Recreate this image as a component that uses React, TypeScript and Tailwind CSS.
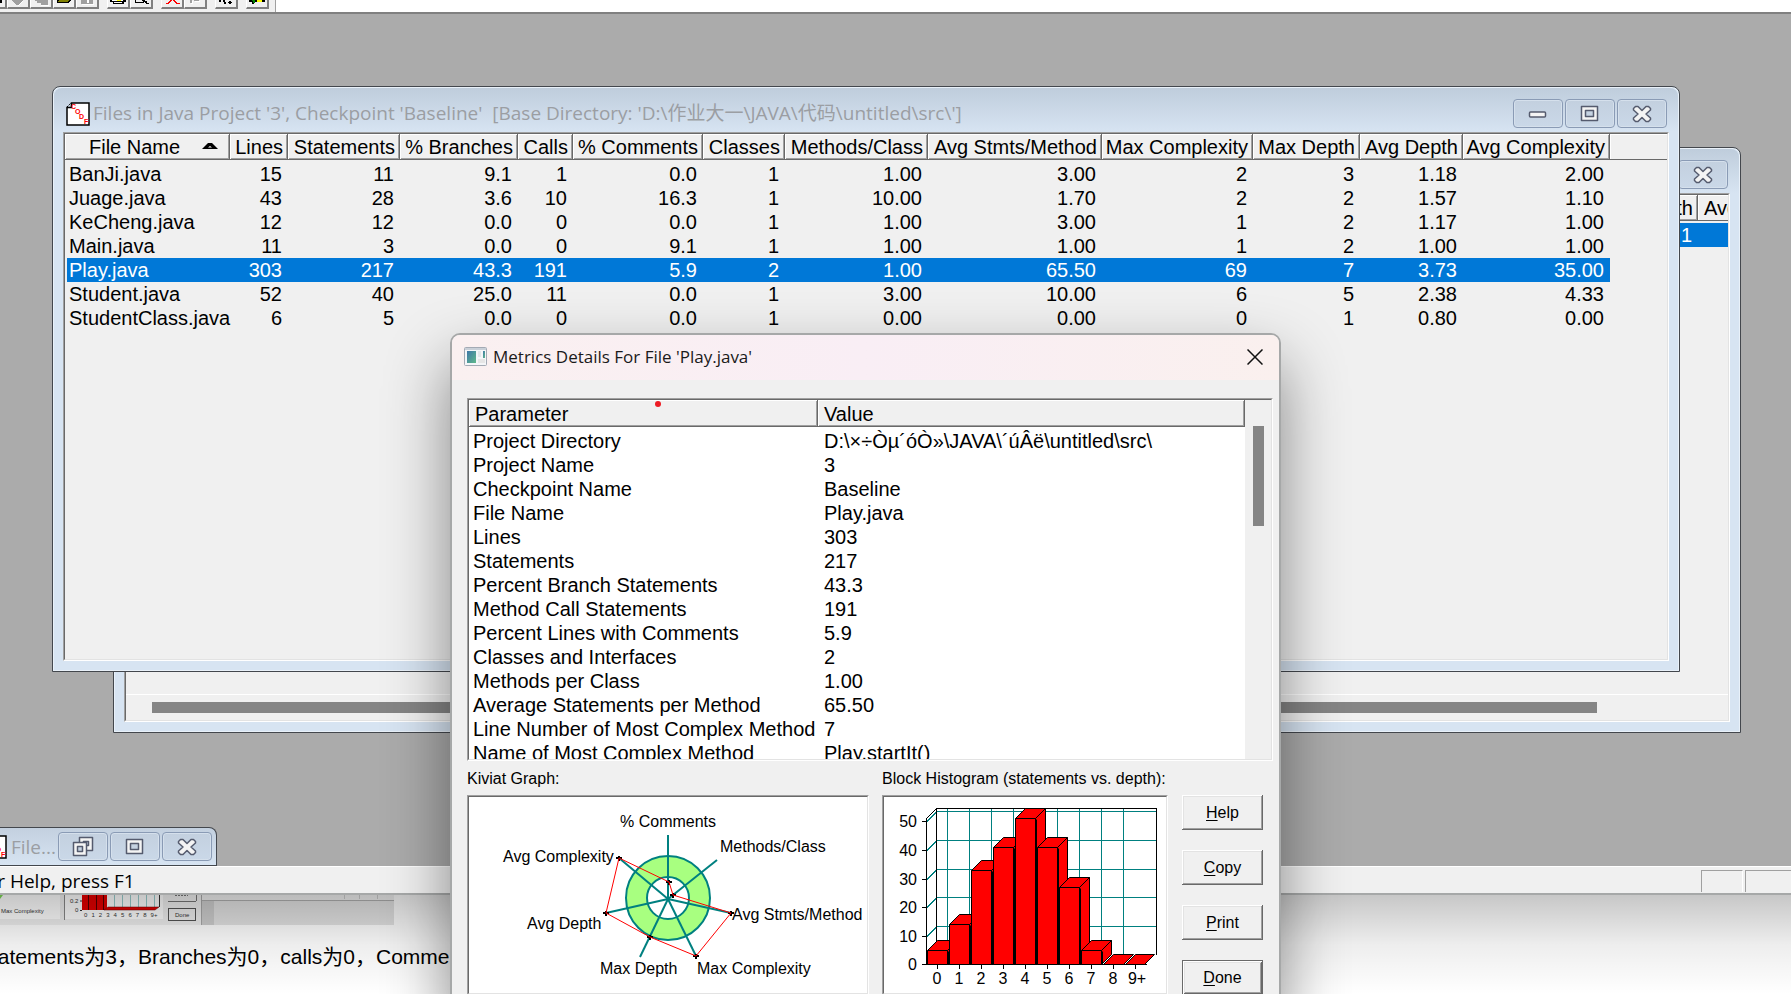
import type { ReactNode } from "react";

type Column = { label: string; width: string };

const columns: Column[] = [
  { label: "File Name", width: "w-[165px]" },
  { label: "Lines", width: "w-[58px]" },
  { label: "Statements", width: "w-[112px]" },
  { label: "% Branches", width: "w-[118px]" },
  { label: "Calls", width: "w-[55px]" },
  { label: "% Comments", width: "w-[130px]" },
  { label: "Classes", width: "w-[82px]" },
  { label: "Methods/Class", width: "w-[143px]" },
  { label: "Avg Stmts/Method", width: "w-[174px]" },
  { label: "Max Complexity", width: "w-[151px]" },
  { label: "Max Depth", width: "w-[107px]" },
  { label: "Avg Depth", width: "w-[103px]" },
  { label: "Avg Complexity", width: "w-[147px]" },
];

const files = [
  ["BanJi.java", "15", "11", "9.1", "1", "0.0", "1", "1.00", "3.00", "2", "3", "1.18", "2.00"],
  ["Juage.java", "43", "28", "3.6", "10", "16.3", "1", "10.00", "1.70", "2", "2", "1.57", "1.10"],
  ["KeCheng.java", "12", "12", "0.0", "0", "0.0", "1", "1.00", "3.00", "1", "2", "1.17", "1.00"],
  ["Main.java", "11", "3", "0.0", "0", "9.1", "1", "1.00", "1.00", "1", "2", "1.00", "1.00"],
  ["Play.java", "303", "217", "43.3", "191", "5.9", "2", "1.00", "65.50", "69", "7", "3.73", "35.00"],
  ["Student.java", "52", "40", "25.0", "11", "0.0", "1", "3.00", "10.00", "6", "5", "2.38", "4.33"],
  ["StudentClass.java", "6", "5", "0.0", "0", "0.0", "1", "0.00", "0.00", "0", "1", "0.80", "0.00"],
];

const details = [
  ["Project Directory", "D:\\×÷Òµ´óÒ»\\JAVA\\´úÂë\\untitled\\src\\"],
  ["Project Name", "3"],
  ["Checkpoint Name", "Baseline"],
  ["File Name", "Play.java"],
  ["Lines", "303"],
  ["Statements", "217"],
  ["Percent Branch Statements", "43.3"],
  ["Method Call Statements", "191"],
  ["Percent Lines with Comments", "5.9"],
  ["Classes and Interfaces", "2"],
  ["Methods per Class", "1.00"],
  ["Average Statements per Method", "65.50"],
  ["Line Number of Most Complex Method", "7"],
  ["Name of Most Complex Method", "Play.startIt()"],
];

const headCell =
  "flex items-center overflow-hidden border-r border-b border-[#696969] bg-[#f0f0f0] font-normal whitespace-nowrap shadow-[inset_1px_1px_0_#fff,inset_-1px_-1px_0_#a0a0a0]";

const sunken =
  "border border-t-[#a0a0a0] border-l-[#a0a0a0] border-r-white border-b-white";
const sunkenInner =
  "border border-t-[#696969] border-l-[#696969] border-r-[#e3e3e3] border-b-[#e3e3e3]";

/* Page with the red CODE letters running down it */
const CodeIcon = () => (
  <svg width="24" height="24" viewBox="0 0 24 24" className="shrink-0" aria-hidden="true">
    <path d="M5.500 1H23V23H1V5.500H5.500Z" fill="#fff" stroke="#000" strokeWidth="1.500" />
    <path d="M1 5 5 1" fill="none" stroke="#000" strokeDasharray="2 1" />
    <g fill="#f00" fontSize="7" fontWeight="bold" fontFamily="Liberation Sans, sans-serif">
      <text x="5" y="7">C</text>
      <text x="9" y="12">O</text>
      <text x="13" y="17">D</text>
      <text x="18" y="22">F</text>
    </g>
  </svg>
);

type Kind = "Minimize" | "Maximize" | "Restore" | "Close";

const glyphs: Record<Kind, ReactNode> = {
  Minimize: <rect x="3.500" y="10" width="16" height="5" rx="1" />,
  Maximize: (
    <>
      <path d="M3.500 4.500H19.500V18.500H3.500Z" />
      <path d="M7.500 8.500H15.500V14.500H7.500Z" fill="#c6d3e2" />
    </>
  ),
  Restore: (
    <>
      <path d="M8.500 2.500H21.500V15.500H8.500Z" />
      <path d="M12.500 6.500H17.500V10.500H12.500Z" fill="#c6d3e2" />
      <path d="M2.500 7.500H15.500V20.500H2.500Z" />
      <path d="M6.500 11.500H11.500V16.500H6.500Z" fill="#c6d3e2" />
    </>
  ),
  Close: (
    <path d="M3.500 6.500 5.500 4.500H8L12 8.500 16 4.500H18.500L20.500 6.500V8L16 12 20.500 16V17.500L18.500 19.500H16L12 15.500 8 19.500H5.500L3.500 17.500V16L8 12 3.500 8Z" />
  ),
};

const WindowButton = ({ kind }: { kind: Kind }) => (
  <button
    type="button"
    aria-label={kind}
    className="flex h-[29px] w-[50px] items-center justify-center rounded-sm border border-[#8a9bb5] bg-linear-to-b from-[#c3d0df] to-[#cad8e8] shadow-[inset_0_0_0_1px_#d5e0ec]"
  >
    <svg width="24" height="24" viewBox="0 0 24 24" fill="#f4f4f4" stroke="#555b6e" strokeWidth="1.500" strokeLinejoin="round">
      {glyphs[kind]}
    </svg>
  </button>
);

type WindowProps = {
  title: string;
  className: string;
  children: ReactNode;
};

const MdiWindow = ({ title, className, children }: WindowProps) => (
  <section
    className={`absolute flex h-[586px] flex-col rounded-t-lg border border-[#43474d] bg-[#d7e4f2] px-[10px] pb-[10px] shadow-[inset_0_0_0_1px_#e9f1f9] ${className}`}
  >
    <header className="-mx-[9px] mt-px flex h-[44px] shrink-0 items-start rounded-t-lg bg-linear-to-b from-[#bfcddc] to-[#d7e4f2] px-[11px] pt-[11px]">
      <div className="flex h-[29px] min-w-0 flex-1 items-center gap-[3px] pl-px">
        <CodeIcon />
        <h2 className="truncate font-['Open_Sans','Noto_Sans_CJK_SC',sans-serif] text-[19px] whitespace-pre text-[#9b9ea3]">
          {title}
        </h2>
      </div>
      <div className="flex gap-0.5">
        <WindowButton kind="Minimize" />
        <WindowButton kind="Maximize" />
        <WindowButton kind="Close" />
      </div>
    </header>
    <div className={`flex min-h-0 flex-1 ${sunken}`}>
      <div className={`flex min-w-0 flex-1 flex-col overflow-hidden bg-[#f0f0f0] ${sunkenInner}`}>
        {children}
      </div>
    </div>
  </section>
);

const FileTable = () => (
  <table className="w-full table-fixed border-separate border-spacing-0 text-[20px] leading-6">
    <thead>
      <tr>
        {columns.map((col, i) => (
          <th key={col.label} scope="col" className={`p-0 pb-0.5 ${col.width}`}>
            <div className={`h-[26px] ${headCell} ${i === 0 ? "justify-start pl-6" : "justify-end pr-1"}`}>
              {col.label}
              {i === 0 && (
                <svg width="16" height="7" viewBox="0 0 16 7" className="ml-[22px]" aria-hidden="true">
                  <path d="M0 6 6 0H10L16 6Z" fill="#000" />
                  <path d="M6 4.500 8 3 10 4.500Z" fill="#fff" />
                </svg>
              )}
            </div>
          </th>
        ))}
        <td className="p-0 pb-0.5">
          <div className="h-[26px] border-b border-[#696969] shadow-[inset_1px_1px_0_#fff]" />
        </td>
      </tr>
    </thead>
    <tbody>
      {files.map((row) => {
        const selected = row[0] === "Play.java";
        return (
          <tr key={row[0]}>
            {row.map((cell, i) => (
              <td
                key={columns[i].label}
                className={`h-6 p-0 whitespace-nowrap ${selected ? "bg-[#0078d7] text-white" : ""} ${
                  i === 0 ? "border-l-2 border-[#f0f0f0] pl-0.5" : "pr-1.5 text-right"
                }`}
              >
                {cell}
              </td>
            ))}
            <td />
          </tr>
        );
      })}
    </tbody>
  </table>
);

const ProjectTable = () => (
  <table className="w-full table-fixed border-separate border-spacing-0 text-[20px] leading-6">
    <thead>
      <tr>
        <th scope="col" className="p-0 pb-0.5">
          <div className={`h-[26px] justify-end pr-1 ${headCell}`}>Max Depth</div>
        </th>
        <th scope="col" className="w-[30px] p-0 pb-0.5">
          <div className="flex h-[26px] items-center overflow-hidden border-b border-[#696969] pl-1.5 font-normal whitespace-nowrap shadow-[inset_1px_1px_0_#fff]">
            Avg Depth
          </div>
        </th>
      </tr>
    </thead>
    <tbody>
      <tr className="bg-[#0078d7] text-white">
        <td className="h-6 p-0 pr-1.5 text-right">1</td>
        <td className="h-6 p-0" />
      </tr>
    </tbody>
  </table>
);

/* Spokes of the Kiviat wheel, clockwise from the top */
const spokes = [
  [199, 38],
  [248, 63],
  [262, 116],
  [227, 159],
  [171, 160],
  [137, 116],
  [150, 61],
];

const kiviatPoints = [
  [200, 85],
  [204, 98],
  [262, 116],
  [227, 159],
  [181, 140],
  [137, 116],
  [150, 61],
];

const kiviatLabels = [
  { text: "% Comments", x: 151, y: 30 },
  { text: "Methods/Class", x: 251, y: 55 },
  { text: "Avg Stmts/Method", x: 263, y: 123 },
  { text: "Max Complexity", x: 228, y: 177 },
  { text: "Max Depth", x: 131, y: 177 },
  { text: "Avg Depth", x: 58, y: 132 },
  { text: "Avg Complexity", x: 34, y: 65 },
];

const KiviatGraph = () => (
  <svg width="398" height="196" viewBox="0 0 398 196" role="img" aria-label="Kiviat Graph">
    <circle cx="199" cy="101" r="42" fill="#a8ff80" stroke="#008080" strokeWidth="2" />
    <circle cx="199" cy="101" r="21" fill="#fff" stroke="#008080" strokeWidth="2" />
    {spokes.map(([x, y]) => (
      <line key={`${x}-${y}`} x1="199" y1="102" x2={x} y2={y} stroke="#008080" strokeWidth="2" />
    ))}
    {kiviatPoints.map(([x, y]) => (
      <path key={`${x}-${y}`} d={`M${x - 3} ${y}h6M${x} ${y - 2}v5`} stroke="#000" strokeWidth="2" />
    ))}
    <polygon points={kiviatPoints.map((p) => p.join(",")).join(" ")} fill="none" stroke="#f00" />
    <g fontSize="16" fill="#000">
      {kiviatLabels.map((l) => (
        <text key={l.text} x={l.x} y={l.y}>
          {l.text}
        </text>
      ))}
    </g>
  </svg>
);

const depthBars = [
  { depth: "0", top: 153 },
  { depth: "1", top: 127 },
  { depth: "2", top: 73 },
  { depth: "3", top: 50 },
  { depth: "4", top: 21 },
  { depth: "5", top: 50 },
  { depth: "6", top: 90 },
  { depth: "7", top: 153 },
  { depth: "8", top: 167 },
  { depth: "9+", top: 167 },
];

const levels = [
  { label: "50", y: 24 },
  { label: "40", y: 53 },
  { label: "30", y: 82 },
  { label: "20", y: 110 },
  { label: "10", y: 139 },
  { label: "0", y: 167 },
];

const BlockHistogram = () => (
  <svg width="282" height="196" viewBox="0 0 282 196" role="img" aria-label="Block Histogram">
    <g fill="none" stroke="#008080" shapeRendering="crispEdges">
      {depthBars.slice(0, 9).map((b, i) => (
        <path key={b.depth} d={`M${63.5 + i * 22} 12V157`} />
      ))}
      {levels.slice(0, 5).map((l) => (
        <path key={l.label} d={`M43 ${l.y + 0.5}L53 ${l.y - 9.5}H272`} />
      ))}
    </g>
    <g fill="none" stroke="#000" shapeRendering="crispEdges">
      <path d="M52.500 157V11.500H272.500V157.500M42.500 21.500 52.500 11.500M42.500 21V167.500H262.500" />
      {levels.map((l) => (
        <path key={l.label} d={`M38 ${l.y + 0.5}H43`} />
      ))}
    </g>
    {depthBars.map((b, i) => {
      const x = 43.5 + i * 22;
      const y = b.top + 0.5;
      const w = i === 9 ? 19 : 20;
      return (
        <g key={b.depth} fill="#f00" stroke="#000" strokeLinejoin="round">
          <path d={`M${x} ${y}l10 -10h${w}l-10 10z`} />
          {b.top < 167 && (
            <>
              <path d={`M${x + 20} ${y}l10 -10V157.500L${x + 20} 167.500z`} />
              <path d={`M${x} ${y}h20V167.500h-20z`} />
              <path d={`M${x + 21} ${y + 1}V167`} />
            </>
          )}
          <path d={`M${x + 10} 168v4`} />
        </g>
      );
    })}
    <g fontSize="16" fill="#000">
      {levels.map((l) => (
        <text key={l.label} x="33" y={l.y + 6} textAnchor="end">
          {l.label}
        </text>
      ))}
      {depthBars.map((b, i) => (
        <text key={b.depth} x={(i === 9 ? 55 : 53) + i * 22} y="187" textAnchor="middle">
          {b.depth}
        </text>
      ))}
    </g>
  </svg>
);

const DialogButton = ({ label, primary = false }: { label: string; primary?: boolean }) => (
  <button
    type="button"
    className={`h-[35px] w-[81px] bg-[#f0f0f0] text-[16px] ${
      primary
        ? "border border-[#696969] shadow-[inset_1px_1px_0_#fff,inset_-1px_-1px_0_#696969,inset_2px_2px_0_#e3e3e3,inset_-2px_-2px_0_#a0a0a0]"
        : "shadow-[inset_-1px_-1px_0_#696969,inset_1px_1px_0_#fff,inset_-2px_-2px_0_#a0a0a0,inset_2px_2px_0_#e3e3e3]"
    }`}
  >
    <span className="underline underline-offset-2">{label[0]}</span>
    {label.slice(1)}
  </button>
);

const ChartPanel = ({ caption, className, children }: { caption: string; className: string; children: ReactNode }) => (
  <figure className={className}>
    <figcaption className="flex h-[34px] items-center pt-0.5 text-[16px] whitespace-nowrap">{caption}</figcaption>
    <div className={`h-[200px] ${sunken}`}>
      <div className={`h-full overflow-hidden bg-white ${sunkenInner}`}>{children}</div>
    </div>
  </figure>
);

const MetricsDialog = () => (
  <div
    role="dialog"
    aria-labelledby="metrics-title"
    className="absolute top-[333px] -bottom-10 left-[450px] z-20 flex w-[831px] flex-col rounded-[10px] border-2 border-[#a6a8a8] bg-[#f0f0f0] shadow-[0_30px_64px_rgba(0,0,0,0.45)]"
  >
    <header className="flex h-[45px] shrink-0 items-center rounded-t-lg bg-linear-to-r from-[#faf0f0] via-[#f9eef5] to-[#faf0ee] pr-4 pb-0.5 pl-3">
      <svg width="23" height="19" viewBox="0 0 23 19" aria-hidden="true">
        <defs>
          <linearGradient id="pane" x1="0" y1="0" x2="1" y2="1">
            <stop offset="0" stopColor="#3f77a8" />
            <stop offset="1" stopColor="#5fb98a" />
          </linearGradient>
        </defs>
        <rect x=".5" y=".5" width="22" height="18" rx="1" fill="#f4f6f8" stroke="#a3aab4" />
        <path d="M1 2H22" stroke="#c9d0d8" strokeWidth="2" />
        <rect x="3" y="4" width="9" height="12" fill="url(#pane)" />
        <rect x="14" y="4" width="3" height="6" fill="#e3e6e9" />
        <rect x="19" y="4" width="2" height="7" fill="url(#pane)" />
        <rect x="14" y="12" width="7" height="4" fill="#e6e6e6" />
      </svg>
      <h2 id="metrics-title" className="ml-1.5 flex-1 font-['Open_Sans',sans-serif] text-[17px] text-[#1a1a1a]">
        Metrics Details For File 'Play.java'
      </h2>
      <button type="button" aria-label="Close dialog">
        <svg width="16" height="16" viewBox="0 0 16 16" stroke="#111" strokeWidth="1.500">
          <path d="M.5 .5 15.500 15.500M15.500 .5 .5 15.500" />
        </svg>
      </button>
    </header>

    <div className="flex flex-col pt-[18px] pr-1.5 pl-[15px]">
      {/* Parameter list */}
      <div className={`h-[363px] ${sunken}`}>
        <div className={`relative flex h-full overflow-hidden bg-white ${sunkenInner}`}>
          <table className="h-fit flex-1 table-fixed border-separate border-spacing-0 text-left text-[20px] leading-6">
            <thead>
              <tr>
                <th scope="col" className="w-[349px] p-0 pb-0.5">
                  <div className={`h-[27px] pt-0.5 pl-1.5 ${headCell}`}>Parameter</div>
                </th>
                <th scope="col" className="p-0 pb-0.5">
                  <div className={`h-[27px] pt-0.5 pl-1.5 ${headCell}`}>Value</div>
                </th>
              </tr>
            </thead>
            <tbody>
              {details.map(([name, value]) => (
                <tr key={name}>
                  <td className="h-6 p-0 pl-1 whitespace-nowrap">{name}</td>
                  <td className="h-6 p-0 pl-1.5 whitespace-nowrap">{value}</td>
                </tr>
              ))}
            </tbody>
          </table>
          <div className="flex w-[26px] justify-center bg-[#f0f0f0] pt-[26px]">
            <div className="h-[100px] w-[11px] bg-[#858585]" />
          </div>
          <span className="absolute top-px left-[186px] size-1.5 rounded-full bg-[#ed1c24]" />
        </div>
      </div>

      {/* Charts and actions */}
      <div className="flex">
        <ChartPanel caption="Kiviat Graph:" className="w-[402px]">
          <KiviatGraph />
        </ChartPanel>
        <ChartPanel caption="Block Histogram (statements vs. depth):" className="ml-[13px] w-[286px]">
          <BlockHistogram />
        </ChartPanel>
        <div className="ml-[14px] flex flex-col gap-5 pt-[34px]">
          <DialogButton label="Help" />
          <DialogButton label="Copy" />
          <DialogButton label="Print" />
          <DialogButton label="Done" primary />
        </div>
      </div>
    </div>
  </div>
);

const ToolButton = ({ label, children }: { label: string; children: ReactNode }) => (
  <button
    type="button"
    aria-label={label}
    className="h-[9px] w-[23px] overflow-hidden border-r-2 border-b-2 border-l border-r-[#808080] border-b-[#808080] border-l-white bg-[#f0f0f0]"
  >
    <svg width="20" height="7" viewBox="0 0 20 7" shapeRendering="crispEdges">
      {children}
    </svg>
  </button>
);

const Toolbar = () => (
  <div role="toolbar" className="flex h-3 shrink-0 items-start bg-white">
    <div className="flex h-3 w-[276px] items-start border-r border-[#a0a0a0] bg-[#f0f0f0]">
      <div className="h-[9px] w-[7px] border-r-2 border-b-2 border-[#808080]">
        <div className="h-[3px] w-0.5 bg-black" />
      </div>
      <ToolButton label="Down">
        <path d="M4 0H15V1L11 5H8L4 1Z" fill="#a0a0a0" />
        <path d="M15 1 10 6" stroke="#fff" />
      </ToolButton>
      <ToolButton label="Back">
        <path d="M4 0H17V5H10V3H6V1H4Z" fill="#a0a0a0" />
        <path d="M10 5.500H18" stroke="#fff" />
      </ToolButton>
      <ToolButton label="Open">
        <path d="M3 0H17L15 3H3Z" fill="#000" />
        <path d="M5 0H15L13 2H4Z" fill="#808000" />
      </ToolButton>
      <ToolButton label="Save">
        <path d="M4 0H16V4H4Z" fill="#a0a0a0" />
        <path d="M10 0H12V3H10ZM5 4H17V5H5Z" fill="#fff" />
      </ToolButton>
      <div className="w-2" />
      <ToolButton label="Print">
        <path d="M2 0H18V2H16V4H5V2H2Z" fill="#000" />
        <path d="M4 0H15V1H4ZM6 2H14V3H6Z" fill="#fff" />
        <path d="M9 0H13V1H9Z" fill="#ff0" />
      </ToolButton>
      <ToolButton label="Preview">
        <path d="M4.500 0V2.500H13M11 0 17 4" stroke="#000" fill="none" strokeWidth="1" />
        <path d="M12 0H14V1H16V3H18V4H15V2H12Z" fill="#000" />
      </ToolButton>
      <div className="w-2" />
      <ToolButton label="Delete">
        <path d="M4 3.500H6L9 0M11 0 15 3.500H18" stroke="#f00" strokeWidth="1.500" fill="none" />
      </ToolButton>
      <ToolButton label="Properties">
        <path d="M5 0H7V3H5ZM9 0H14V1H9Z" fill="#a0a0a0" />
        <path d="M7 1H8V4H6V3H7ZM10 1H15V2H10Z" fill="#fff" />
      </ToolButton>
      <div className="w-2" />
      <ToolButton label="Context help">
        <path d="M3 0H5V2H3ZM7 0H9V2H10V4H8V2H7ZM13 1H15V2H16V3H15V4H13V3H12V2H13Z" fill="#000" />
      </ToolButton>
      <div className="w-2" />
      <ToolButton label="Metrics">
        <path d="M2 0H18V2H2ZM5 2H7V4H5Z" fill="#000" />
        <path d="M5 0H8V3H6V1H5Z" fill="#008000" />
        <path d="M10 0H15V2H10Z" fill="#ff0" />
      </ToolButton>
    </div>
  </div>
);

const MinimizedWindow = () => (
  <div className="absolute bottom-0 left-0 flex h-[39px] w-[217px] items-center justify-end gap-0.5 rounded-tr-lg border-t border-r border-b border-[#43474d] bg-linear-to-b from-[#c3d0df] to-[#d7e4f2] pr-1">
    <div className="flex flex-1 items-center gap-1 overflow-hidden">
      <div className="flex w-[9px] justify-end overflow-hidden">
        <CodeIcon />
      </div>
      <span className="pt-0.5 font-['Open_Sans',sans-serif] text-[19px] text-[#9b9ea3]">File...</span>
    </div>
    <WindowButton kind="Restore" />
    <WindowButton kind="Maximize" />
    <WindowButton kind="Close" />
  </div>
);

const StatusBar = () => (
  <div className="flex h-[27px] shrink-0 items-stretch border-t border-white bg-[#f0f0f0]">
    <p className="-ml-6 flex-1 self-center pt-0.5 font-['Open_Sans',sans-serif] text-[19px] leading-6 text-black">
      For Help, press F1
    </p>
    <div className="mt-[3px] mb-px w-[42px] border-t border-l border-[#a0a0a0] border-r border-r-white" />
    <div className="mt-[3px] mb-px ml-0.5 w-[46px] border-t border-l border-[#a0a0a0]" />
  </div>
);

/* Lower strip of an earlier chart, embedded in the document */
const EmbeddedShot = () => (
  <svg width="394" height="30" viewBox="0 0 394 30" aria-hidden="true">
    <rect width="202" height="30" fill="#f0f0f0" />
    <rect x="202" width="192" height="5" fill="#f0f0f0" />
    <path d="M202 5.500H394" stroke="#b0b0b0" />
    <rect x="202" y="6" width="192" height="24" fill="#e4e4e4" />
    <path d="M344.500 0V4M359.500 0V4M377.500 0V4" stroke="#ccc" />
    <rect x="201" width="1" height="30" fill="#aaa" />
    <rect x="202" y="6" width="12" height="24" fill="#cfcfcf" />
    <rect width="60" height="24" fill="#fff" />
    <path d="M0 0H3L0 4Z" fill="#7ed957" />
    <path d="M64.500 0V25" stroke="#888" />
    <rect x="65" width="98" height="24" fill="#fff" />
    <path d="M114.500 0V12M122.500 0V12M130.500 0V12M138.500 0V12M146.500 0V12M154.500 0V12" stroke="#9cc" />
    <path d="M159.500 0V12M80 6H82M80 15.500H82" stroke="#333" />
    <rect x="82" width="25" height="15" fill="#e60000" />
    <path d="M88.500 0V15M96.500 0V15M103.500 0V15" stroke="#500" />
    <path d="M104 15 108 12H159L155 15Z" fill="#e60000" stroke="#600" strokeWidth=".5" />
    <g fontSize="6" fill="#333">
      <text x="1" y="18">Max Complexity</text>
      <text x="70" y="8">0.2</text>
      <text x="75" y="17">0</text>
      {["0", "1", "2", "3", "4", "5", "6", "7", "8", "9+"].map((n, i) => (
        <text key={n} x={84 + i * 7.4} y="22">
          {n}
        </text>
      ))}
      <text x="175" y="22">Done</text>
    </g>
    <path d="M168 6.500H196M196.500 0V6" stroke="#777" />
    <rect x="168.500" y="13.500" width="27" height="12" fill="none" stroke="#555" />
    <path d="M175 .5H188" stroke="#777" strokeDasharray="2 1" />
  </svg>
);

const App = () => {
  return (
    <div className="relative flex h-screen flex-col overflow-hidden bg-white font-['Liberation_Sans',Arial,sans-serif] text-black">
      <Toolbar />

      <main className="relative min-h-0 flex-1 overflow-hidden border-t-2 border-[#808080] bg-[#ababab]">
        <MdiWindow title="Files" className="top-[133px] right-[50px] left-[113px]">
          <ProjectTable />
          <div className="mt-auto flex h-[26px] items-center border-t border-white pr-[131px] pl-[26px]">
            <div className="h-[11px] flex-1 bg-[#858585]" />
          </div>
        </MdiWindow>
        <MdiWindow
          title={"Files in Java Project '3', Checkpoint 'Baseline'  [Base Directory: 'D:\\作业大一\\JAVA\\代码\\untitled\\src\\']"}
          className="top-[72px] right-[111px] left-[52px]"
        >
          <FileTable />
        </MdiWindow>
        <MinimizedWindow />
      </main>

      <StatusBar />

      {/* Document showing below the application window */}
      <article className="relative h-[101px] shrink-0 overflow-hidden border-t-2 border-[#a6a8a8] bg-white">
        <EmbeddedShot />
        <p className="mt-[18px] -ml-[22px] font-['Liberation_Sans','Noto_Sans_CJK_SC',sans-serif] text-[21px] leading-7 whitespace-nowrap">
          Statements为3，Branches为0，calls为0，Comments
        </p>
        <div className="absolute inset-0 bg-linear-to-b from-black/22 via-black/7 to-transparent" />
      </article>

      <MetricsDialog />
    </div>
  );
};

export default App;
